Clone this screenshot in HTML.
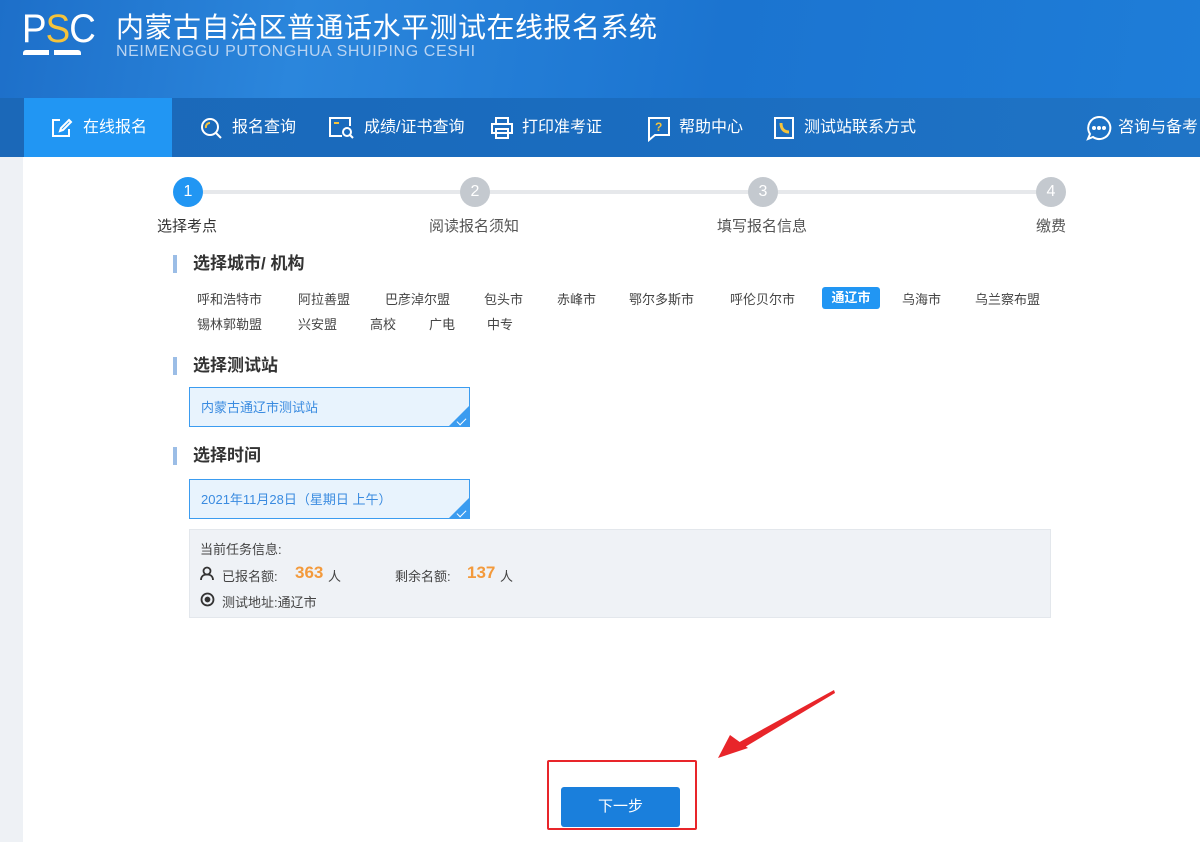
<!DOCTYPE html>
<html><head><meta charset="utf-8"><style>
*{margin:0;padding:0;box-sizing:border-box}
body{width:1200px;height:842px;overflow:hidden;font-family:"Liberation Sans","Noto Sans CJK SC",sans-serif;background:#fff;position:relative;color:#333}
.hdr{position:absolute;left:0;top:0;width:1200px;height:98px;background:linear-gradient(100deg,#1d6fc9 0%,#2b86dc 25%,#1b74d0 60%,#1e7dd8 100%)}
.nav{position:absolute;left:0;top:98px;width:1200px;height:59px;background:linear-gradient(90deg,#1b68b8,#1a6cbf 50%,#1f74c6)}
.nav span{position:absolute;top:0;line-height:59px;color:#fff;font-size:16px}
.act{position:absolute;left:24px;top:98px;width:148px;height:59px;background:#2196f3}
.side{position:absolute;left:0;top:157px;width:23px;height:685px;background:#eef1f5}
.abs{position:absolute}
.step{position:absolute;width:30px;height:30px;border-radius:50%;background:#c4c9cf;color:#fff;text-align:center;line-height:30px;font-size:16px;top:177px}
.sl{position:absolute;font-size:15px;color:#555;top:215px}
.h{position:absolute;left:173px;font-size:17px;font-weight:bold;color:#333;padding-left:16px;border-left:4px solid #9bbde6;line-height:18px}
.c{position:absolute;font-size:13px;color:#444}
.box{position:absolute;left:189px;width:281px;height:40px;border:1px solid #3b9cf0;background:#e8f3fd;color:#3a8be0;font-size:13px;padding-left:11px;line-height:40px;overflow:hidden}
.box i{position:absolute;right:0;bottom:0;width:0;height:0;border-left:20px solid transparent;border-bottom:20px solid #3b9cf0}
.box b{position:absolute;right:3px;bottom:3px;width:9px;height:5px;border-left:1.5px solid #fff;border-bottom:1.5px solid #fff;transform:rotate(-45deg)}
</style></head><body>
<div class="hdr"></div>
<div class="abs" style="left:22px;top:7px;color:#fff;font-size:40px;letter-spacing:-1px;font-family:'Liberation Sans',sans-serif;transform:scaleX(0.92);transform-origin:left">P<span style="color:#f5c33b">S</span>C</div>
<div class="abs" style="left:23px;top:50px;width:26px;height:5px;background:#fff;border-radius:3px 0 0 0"></div>
<div class="abs" style="left:54px;top:50px;width:27px;height:5px;background:#fff;border-radius:0 3px 0 0"></div>
<div class="abs" style="left:116px;top:6px;color:#fff;font-size:28px;letter-spacing:0.5px">内蒙古自治区普通话水平测试在线报名系统</div>
<div class="abs" style="left:116px;top:43px;color:#b9d4f2;font-size:16px;letter-spacing:0.6px">NEIMENGGU PUTONGHUA SHUIPING CESHI</div>
<div class="nav"></div>
<div class="act"></div>
<div class="nav" style="background:none">
<svg class="abs" style="left:51px;top:20px" width="22" height="20" viewBox="0 0 22 20" fill="none" stroke="#fff" stroke-width="2"><path d="M9 2H2v16h16v-7"/><path d="M18 2l2 2-8 8-3 1 1-3z"/></svg>
<span style="left:83px">在线报名</span>
<svg class="abs" style="left:199px;top:18px" width="24" height="24" viewBox="0 0 24 24" fill="none" stroke="#fff" stroke-width="2"><circle cx="11" cy="11" r="8"/><path d="M17 17l5 5"/><path d="M7 12a4 4 0 0 1 4-5" stroke="#f5c33b"/></svg>
<span style="left:232px">报名查询</span>
<svg class="abs" style="left:328px;top:18px" width="28" height="24" viewBox="0 0 28 24" fill="none" stroke="#fff" stroke-width="2"><path d="M14 20H2V2h20v8"/><path d="M6 7h5" stroke="#f5c33b"/><circle cx="19" cy="16" r="4"/><path d="M22 19l3 3"/></svg>
<span style="left:364px">成绩/证书查询</span>
<svg class="abs" style="left:490px;top:18px" width="24" height="24" viewBox="0 0 24 24" fill="none" stroke="#fff" stroke-width="2"><rect x="6" y="2" width="12" height="6"/><rect x="2" y="8" width="20" height="9"/><rect x="6" y="13" width="12" height="9"/></svg>
<span style="left:522px">打印准考证</span>
<svg class="abs" style="left:647px;top:18px" width="24" height="26" viewBox="0 0 24 26" fill="none" stroke="#fff" stroke-width="2"><path d="M2 2h20v17H8l-6 5z"/><text x="8" y="15" font-size="12" fill="#f5c33b" stroke="none" font-weight="bold">?</text></svg>
<span style="left:679px">帮助中心</span>
<svg class="abs" style="left:772px;top:18px" width="24" height="24" viewBox="0 0 24 24" fill="none" stroke="#fff" stroke-width="2"><rect x="3" y="2" width="18" height="20"/><path d="M9 7c0 6 3 9 8 9" stroke="#f5c33b" stroke-width="3"/></svg>
<span style="left:804px">测试站联系方式</span>
<svg class="abs" style="left:1086px;top:17px" width="26" height="26" viewBox="0 0 26 26" fill="none" stroke="#fff" stroke-width="2"><path d="M13 2a11 11 0 1 1-6 20l-5 2 2-5A11 11 0 0 1 13 2z"/><circle cx="8" cy="13" r="1" fill="#fff"/><circle cx="13" cy="13" r="1" fill="#fff"/><circle cx="18" cy="13" r="1" fill="#fff"/></svg>
<span style="left:1118px">咨询与备考</span>
</div>
<div class="side"></div>

<div class="abs" style="left:190px;top:190px;width:860px;height:4px;background:#e6e8eb"></div>
<div class="step" style="left:173px;background:#2196f3">1</div>
<div class="step" style="left:460px">2</div>
<div class="step" style="left:748px">3</div>
<div class="step" style="left:1036px">4</div>
<div class="sl" style="left:157px;color:#333">选择考点</div>
<div class="sl" style="left:429px">阅读报名须知</div>
<div class="sl" style="left:717px">填写报名信息</div>
<div class="sl" style="left:1036px">缴费</div>

<div class="h" style="top:255px">选择城市/ 机构</div>
<div class="c" style="left:197px;top:289px">呼和浩特市</div>
<div class="c" style="left:298px;top:289px">阿拉善盟</div>
<div class="c" style="left:385px;top:289px">巴彦淖尔盟</div>
<div class="c" style="left:484px;top:289px">包头市</div>
<div class="c" style="left:557px;top:289px">赤峰市</div>
<div class="c" style="left:629px;top:289px">鄂尔多斯市</div>
<div class="c" style="left:730px;top:289px">呼伦贝尔市</div>
<div class="abs" style="left:822px;top:287px;width:58px;height:22px;background:#2196f3;border-radius:3px;color:#fff;font-size:13px;font-weight:bold;text-align:center;line-height:22px">通辽市</div>
<div class="c" style="left:902px;top:289px">乌海市</div>
<div class="c" style="left:975px;top:289px">乌兰察布盟</div>
<div class="c" style="left:197px;top:314px">锡林郭勒盟</div>
<div class="c" style="left:298px;top:314px">兴安盟</div>
<div class="c" style="left:370px;top:314px">高校</div>
<div class="c" style="left:429px;top:314px">广电</div>
<div class="c" style="left:487px;top:314px">中专</div>

<div class="h" style="top:357px">选择测试站</div>
<div class="box" style="top:387px">内蒙古通辽市测试站<i></i><b></b></div>
<div class="h" style="top:447px">选择时间</div>
<div class="box" style="top:479px">2021年11月28日（星期日 上午）<i></i><b></b></div>

<div class="abs" style="left:189px;top:529px;width:862px;height:89px;background:#eff2f6;border:1px solid #e3e7ec"></div>
<div class="c" style="left:200px;top:539px">当前任务信息:</div>
<svg class="abs" style="left:200px;top:566px" width="14" height="15" viewBox="0 0 14 15" fill="none" stroke="#333" stroke-width="1.8"><circle cx="7" cy="5" r="3.5"/><path d="M1 14c0-4 3-5.5 6-5.5s6 1.5 6 5.5"/></svg>
<div class="c" style="left:222px;top:566px">已报名额:</div>
<div class="abs" style="left:295px;top:563px;color:#f39a3c;font-size:17px;font-weight:bold">363</div>
<div class="c" style="left:328px;top:566px">人</div>
<div class="c" style="left:395px;top:566px">剩余名额:</div>
<div class="abs" style="left:467px;top:563px;color:#f39a3c;font-size:17px;font-weight:bold">137</div>
<div class="c" style="left:500px;top:566px">人</div>
<svg class="abs" style="left:200px;top:592px" width="15" height="16" viewBox="0 0 15 16" fill="none" stroke="#333" stroke-width="1.8"><circle cx="7.5" cy="7.5" r="6"/><circle cx="7.5" cy="7.5" r="2" fill="#333"/></svg>
<div class="c" style="left:222px;top:592px">测试地址:通辽市</div>

<div class="abs" style="left:547px;top:760px;width:150px;height:70px;border:2px solid #e8252a;border-radius:2px"></div>
<div class="abs" style="left:561px;top:787px;width:119px;height:40px;background:#1a7fdc;border-radius:3px;color:#fff;font-size:15px;text-align:center;line-height:40px">下一步</div>
<svg class="abs" style="left:700px;top:680px" width="150" height="90" viewBox="0 0 150 90"><polygon points="134,10 135,13 40,70 36,64" fill="#e8252a"/><polygon points="18,78 30,55 48,68" fill="#e8252a"/></svg>
</body></html>
